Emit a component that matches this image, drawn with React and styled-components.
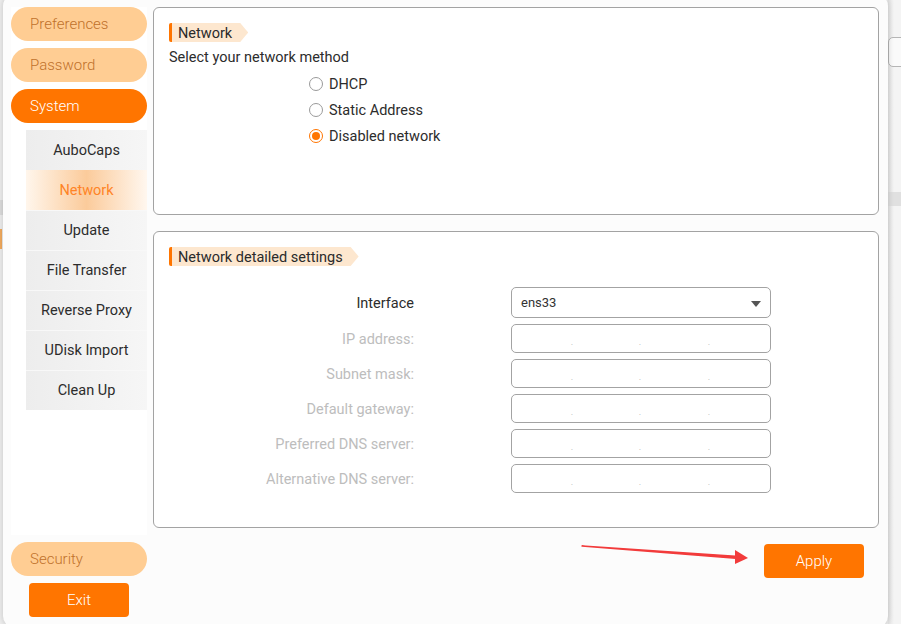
import React from 'react';
import styled, { createGlobalStyle } from 'styled-components';

const GlobalStyle = createGlobalStyle`
  html, body {
    margin: 0;
    padding: 0;
    background: #ececec;
  }
  body {
    font-family: Roboto, "Liberation Sans", "Noto Sans CJK SC", sans-serif;
    color: #333;
  }
  * { box-sizing: border-box; }
`;

const ORANGE = '#ff7500';

const Page = styled.div`
  display: flex;
  width: 901px;
  height: 624px;
  overflow: hidden;
  background: #eeeeee;
`;

/* bits of the app that sits behind the dialog */
const LeftStrip = styled.div`
  width: 3px;
  flex: none;
  display: flex;
  flex-direction: column;
  padding-top: 200px;
  gap: 14px;
`;

const StripBar = styled.div`
  height: 15px;
  background: #dcdcdc;
`;

const StripMark = styled.div`
  height: 20px;
  border-left: 2px solid #f39a3a;
  opacity: 0.8;
`;

const RightStrip = styled.div`
  flex: 1;
  display: flex;
  flex-direction: column;
  align-items: flex-end;
  padding-top: 37px;
  background: linear-gradient(to right, #e4e4e4, #f4f4f4 6px, #f4f4f4);
`;

const GhostInput = styled.div`
  width: 30px;
  height: 30px;
  margin-right: 4px;
  border: 1px solid #b5b5b5;
  border-radius: 5px;
  background: #fafafa;
`;

const GhostText = styled.div`
  margin-top: 64px;
  margin-right: 6px;
  font-size: 13px;
  color: #444;
`;

const GhostBar = styled.div`
  align-self: stretch;
  margin-top: 46px;
  height: 14px;
  background: #e0e0e0;
`;

const Dialog = styled.div`
  position: relative;
  z-index: 1;
  flex: none;
  width: 885px;
  height: 634px;
  margin-top: -6px;
  border-radius: 12px;
  background: #fcfcfc;
  box-shadow: 0 0 6px rgba(0, 0, 0, 0.18);
  display: flex;
  align-items: flex-start;
  gap: 6px;
  padding: 13px 9px 11px 8px;
`;

const Sidebar = styled.div`
  width: 136px;
  height: 610px;
  flex: none;
  display: flex;
  flex-direction: column;
  gap: 7px;
`;

const SideTop = styled.div`
  display: flex;
  flex-direction: column;
  gap: 7px;
  background: #ffffff;
  flex: 1;
`;

const Pill = styled.div`
  height: 34px;
  flex: none;
  border-radius: 17px;
  padding-left: 19px;
  display: flex;
  align-items: center;
  font-size: 15px;
  font-weight: 300;
  background: ${p => (p.$active ? ORANGE : '#ffcd93')};
  color: ${p => (p.$active ? '#ffffff' : '#c0712b')};
`;

const SubMenu = styled.div`
  margin-left: 15px;
  display: flex;
  flex-direction: column;
`;

const SubItem = styled.div`
  height: 40px;
  display: flex;
  align-items: center;
  justify-content: center;
  font-size: 14.5px;
  color: ${p => (p.$active ? '#ff8426' : '#2c2c2c')};
  background: ${p =>
    p.$active
      ? 'linear-gradient(to right, #fff6ec, #fbcb9b 50%, #fff7ef)'
      : 'linear-gradient(to right, #ededed, #f6f6f6)'};
  border-top: 1px solid ${p => (p.$active ? 'transparent' : '#f8f8f8')};
  &:first-child { border-top: none; }
`;

const ExitButton = styled.div`
  margin-left: 18px;
  width: 100px;
  height: 34px;
  flex: none;
  border-radius: 4px;
  background: ${ORANGE};
  color: #fff;
  font-size: 15px;
  font-weight: 300;
  display: flex;
  align-items: center;
  justify-content: center;
`;

const Main = styled.div`
  width: 726px;
  flex: none;
  display: flex;
  flex-direction: column;
  gap: 16px;
`;

const Panel = styled.div`
  height: ${p => p.$h}px;
  border: 1px solid #a3a3a3;
  border-radius: 6px;
  background: #fff;
  padding: 15px 15px 0 15px;
  display: flex;
  flex-direction: column;
`;

const Tag = styled.div`
  align-self: flex-start;
  height: 19px;
  display: flex;
  align-items: center;
  padding: 1px 16px 0 6px;
  font-size: 14.5px;
  color: #2a2a2a;
  background: #fde7cf;
  border-left: 3px solid ${ORANGE};
  border-radius: 2px 0 0 2px;
  clip-path: polygon(0 0, calc(100% - 8px) 0, 100% 50%, calc(100% - 8px) 100%, 0 100%);
`;

const Prompt = styled.div`
  margin-top: 6px;
  line-height: 20px;
  font-size: 14.5px;
  color: #2c2c2c;
`;

const RadioList = styled.div`
  margin-top: 3px;
  margin-left: 140px;
  display: flex;
  flex-direction: column;
`;

const RadioRow = styled.label`
  height: 26px;
  display: flex;
  align-items: center;
  gap: 6px;
  font-size: 14.5px;
  color: #2c2c2c;
`;

const RadioDot = styled.span`
  width: 14px;
  height: 14px;
  border-radius: 50%;
  border: 1px solid ${p => (p.$on ? ORANGE : '#9a9a9a')};
  background: #fff;
  display: flex;
  align-items: center;
  justify-content: center;
  &::after {
    content: '';
    width: 8px;
    height: 8px;
    border-radius: 50%;
    background: ${p => (p.$on ? ORANGE : 'transparent')};
  }
`;

const FieldGrid = styled.div`
  margin-top: 21px;
  display: grid;
  grid-template-columns: 245px 260px;
  column-gap: 97px;
  row-gap: 6px;
  align-items: center;
`;

const FieldLabel = styled.div`
  text-align: right;
  padding-top: 2px;
  font-size: 14.5px;
  color: ${p => (p.$muted ? '#bdbdbd' : '#2c2c2c')};
`;

const SelectBox = styled.div`
  height: 31px;
  border: 1px solid #a3a3a3;
  border-radius: 5px;
  display: flex;
  align-items: center;
  justify-content: space-between;
  padding: 0 9px 0 9px;
  font-size: 13px;
  color: #333;
`;

const Caret = styled.span`
  width: 0;
  height: 0;
  border-left: 5px solid transparent;
  border-right: 5px solid transparent;
  border-top: 6px solid #555;
  margin-top: 2px;
`;

const IpBox = styled.div`
  height: 29px;
  border: 1px solid #a3a3a3;
  border-radius: 5px;
  display: grid;
  grid-template-columns: 56px 8px 60px 8px 61px 8px 1fr;
  align-items: center;
`;

const IpDot = styled.span`
  text-align: center;
  font-size: 9px;
  color: #b5b5b5;
  padding-top: 6px;
`;

const Footer = styled.div`
  position: relative;
  display: flex;
  justify-content: flex-end;
  padding-right: 15px;
`;

const ApplyButton = styled.div`
  width: 100px;
  height: 34px;
  border-radius: 4px;
  background: ${ORANGE};
  color: #fff;
  font-size: 15px;
  font-weight: 300;
  display: flex;
  align-items: center;
  justify-content: center;
`;

const Annotation = styled.svg`
  position: absolute;
  left: 425px;
  top: -2px;
`;

const subItems = ['AuboCaps', 'Network', 'Update', 'File Transfer', 'Reverse Proxy', 'UDisk Import', 'Clean Up'];
const methods = ['DHCP', 'Static Address', 'Disabled network'];
const ipFields = ['IP address:', 'Subnet mask:', 'Default gateway:', 'Preferred DNS server:', 'Alternative DNS server:'];

const IpInput = () => (
  <IpBox>
    <span />
    <IpDot>.</IpDot>
    <span />
    <IpDot>.</IpDot>
    <span />
    <IpDot>.</IpDot>
    <span />
  </IpBox>
);

export default function App() {
  return (
    <>
      <GlobalStyle />
      <Page>
        <LeftStrip>
          <StripBar />
          <StripMark />
        </LeftStrip>
        <Dialog>
          <Sidebar>
            <SideTop>
              <Pill>Preferences</Pill>
              <Pill>Password</Pill>
              <Pill $active>System</Pill>
              <SubMenu>
                {subItems.map(item => (
                  <SubItem key={item} $active={item === 'Network'}>{item}</SubItem>
                ))}
              </SubMenu>
            </SideTop>
            <Pill>Security</Pill>
            <ExitButton>Exit</ExitButton>
          </Sidebar>
          <Main>
            <Panel $h={208}>
              <Tag>Network</Tag>
              <Prompt>Select your network method</Prompt>
              <RadioList>
                {methods.map(m => (
                  <RadioRow key={m}>
                    <RadioDot $on={m === 'Disabled network'} />
                    {m}
                  </RadioRow>
                ))}
              </RadioList>
            </Panel>
            <Panel $h={297}>
              <Tag>Network detailed settings</Tag>
              <FieldGrid>
                <FieldLabel>Interface</FieldLabel>
                <SelectBox>
                  ens33
                  <Caret />
                </SelectBox>
                {ipFields.map(f => (
                  <React.Fragment key={f}>
                    <FieldLabel $muted>{f}</FieldLabel>
                    <IpInput />
                  </React.Fragment>
                ))}
              </FieldGrid>
            </Panel>
            <Footer>
              <Annotation width="176" height="26" viewBox="0 0 176 26">
                <path d="M4 4 L161 14.5 L161 16.5 Z" fill="#f23b3b" stroke="#f23b3b" strokeWidth="1.4" strokeLinejoin="round" />
                <polygon points="157,8 170,16 157,22" fill="#f23b3b" />
              </Annotation>
              <ApplyButton>Apply</ApplyButton>
            </Footer>
          </Main>
        </Dialog>
        <RightStrip>
          <GhostInput />
          <GhostText>g</GhostText>
          <GhostBar />
        </RightStrip>
      </Page>
    </>
  );
}
